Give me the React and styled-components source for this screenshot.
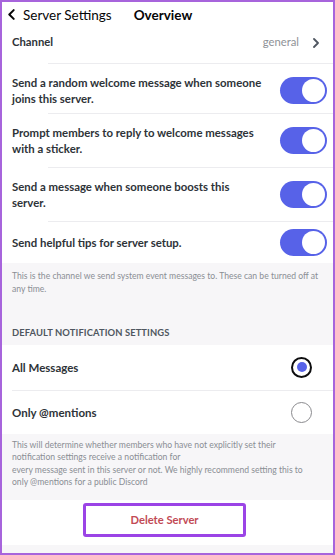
import React from "react";
import styled, { createGlobalStyle } from "styled-components";

const Global = createGlobalStyle`
  html, body { margin: 0; padding: 0; background: #fff; }
  * { box-sizing: border-box; }
  body { font-family: Lato, "Noto Sans", sans-serif; }
`;

const Frame = styled.div`
  width: 335px;
  height: 555px;
  border: 2px solid #a764dc;
  background: #fff;
  overflow: hidden;
  display: flex;
  flex-direction: column;
`;

const Header = styled.div`
  height: 25px;
  display: flex;
  align-items: center;
  gap: 22px;
  padding: 0 4px;
  color: #060607;
  font-size: 13.5px;
`;

const Back = styled.div`
  display: flex;
  align-items: center;
  gap: 6px;
`;

const Title = styled.div`
  font-weight: 700;
`;

const ChannelRow = styled.div`
  height: 36px;
  display: flex;
  align-items: flex-start;
  padding: 8px 12px 0 10px;
  font-size: 11.3px;
  font-weight: 700;
  color: #2e3338;
`;

const Grow = styled.div`
  flex: 1;
`;

const Value = styled.span`
  font-weight: 400;
  color: #8e9297;
  margin-right: 12px;
`;

const Separator = styled.div`
  height: 1px;
  background: #ececef;
  margin-left: ${(p) => p.$inset || 0}px;
`;

const Row = styled.div`
  min-height: ${(p) => p.$h || 52}px;
  display: flex;
  align-items: center;
  gap: 10px;
  padding: ${(p) => p.$top || 0}px 6px 0 10px;
`;

const RowText = styled.div`
  flex: 1;
  font-size: 11.4px;
  line-height: 16px;
  font-weight: 700;
  color: #2e3338;
  white-space: nowrap;
`;

const Toggle = styled.div`
  width: 47px;
  height: 27px;
  border-radius: 14px;
  background: #5762e8;
  display: flex;
  align-items: center;
  justify-content: flex-end;
  padding: 2px;
  flex-shrink: 0;
`;

const Knob = styled.div`
  width: 23px;
  height: 23px;
  border-radius: 50%;
  background: #fff;
`;

const Info = styled.div`
  background: #f7f6f8;
  padding: ${(p) => p.$pad || "7px 10px 8px"};
  font-size: 8.6px;
  line-height: 12.5px;
  color: #8a8e94;
  white-space: nowrap;
`;

const SectionLabel = styled.div`
  margin-top: 32px;
  font-size: 9.4px;
  font-weight: 700;
  letter-spacing: 0.1px;
  color: #4f5660;
  white-space: nowrap;
`;

const RadioRow = styled.div`
  height: ${(p) => p.$h || 44}px;
  display: flex;
  align-items: center;
  padding: 0 21px 0 10px;
  font-size: 11.5px;
  font-weight: 700;
  color: #2e3338;
`;

const Radio = styled.div`
  width: 21px;
  height: 21px;
  border-radius: 50%;
  border: ${(p) => (p.$on ? "2.5px solid #0d0d0f" : "1.5px solid #8a8a8e")};
  display: flex;
  align-items: center;
  justify-content: center;
  &::after {
    content: "";
    display: ${(p) => (p.$on ? "block" : "none")};
    width: 10px;
    height: 10px;
    border-radius: 50%;
    background: #5762e8;
  }
`;

const DeleteRow = styled.div`
  height: 45px;
  display: flex;
  justify-content: center;
  padding-top: 3px;
  padding-right: 6px;
`;

const DeleteButton = styled.button`
  width: 163px;
  height: 34px;
  border: 3px solid #9b44e6;
  border-radius: 3px;
  background: #fff;
  color: #c24a55;
  font-family: Lato, "Noto Sans", sans-serif;
  font-size: 11.2px;
  font-weight: 700;
  padding: 0;
`;

const Bottom = styled.div`
  flex: 1;
  background: #f7f6f8;
`;

const Chevron = ({ dir = "left", size = 10 }) => (
  <svg width={size} height={size} viewBox="0 0 10 10" fill="none">
    <path
      d={dir === "left" ? "M7 1 L3 5 L7 9" : "M3 1 L7 5 L3 9"}
      stroke={dir === "left" ? "#060607" : "#4f5660"}
      strokeWidth="1.8"
      strokeLinecap="round"
      strokeLinejoin="round"
    />
  </svg>
);

const toggles = [
  [["Send a random welcome message when someone", "joins this server."], 49, 4],
  [["Prompt members to reply to welcome messages", "with a sticker."], 53, 0],
  [["Send a message when someone boosts this", "server."], 53, 0],
  [["Send helpful tips for server setup."], 41, 0],
];

export default function App() {
  return (
    <>
      <Global />
      <Frame>
        <Header>
          <Back>
            <Chevron dir="left" size={11} />
            Server Settings
          </Back>
          <Title>Overview</Title>
        </Header>
        <ChannelRow>
          <Grow>Channel</Grow>
          <Value>general</Value>
          <div style={{ marginTop: 2 }}>
            <Chevron dir="right" size={10} />
          </div>
        </ChannelRow>
        {toggles.map(([lines, h, top], i) => (
          <React.Fragment key={i}>
            <Separator $inset={46} />
            <Row $h={h} $top={top}>
              <RowText>
                {lines.map((l, j) => (
                  <React.Fragment key={j}>
                    {j > 0 && <br />}
                    {l}
                  </React.Fragment>
                ))}
              </RowText>
              <Toggle>
                <Knob />
              </Toggle>
            </Row>
          </React.Fragment>
        ))}
        <Info $pad="7px 10px 5px">
          This is the channel we send system event messages to. These can be turned off at
          <br />
          any time.
          <SectionLabel>DEFAULT NOTIFICATION SETTINGS</SectionLabel>
        </Info>
        <RadioRow $h={45}>
          <Grow>All Messages</Grow>
          <Radio $on />
        </RadioRow>
        <Separator $inset={10} />
        <RadioRow $h={43}>
          <Grow>Only @mentions</Grow>
          <Radio />
        </RadioRow>
        <Info $pad="5px 10px 11px">
          This will determine whether members who have not explicitly set their
          <br />
          notification settings receive a notification for
          <br />
          every message sent in this server or not. We highly recommend setting this to
          <br />
          only @mentions for a public Discord
        </Info>
        <DeleteRow>
          <DeleteButton>Delete Server</DeleteButton>
        </DeleteRow>
        <Bottom />
      </Frame>
    </>
  );
}
